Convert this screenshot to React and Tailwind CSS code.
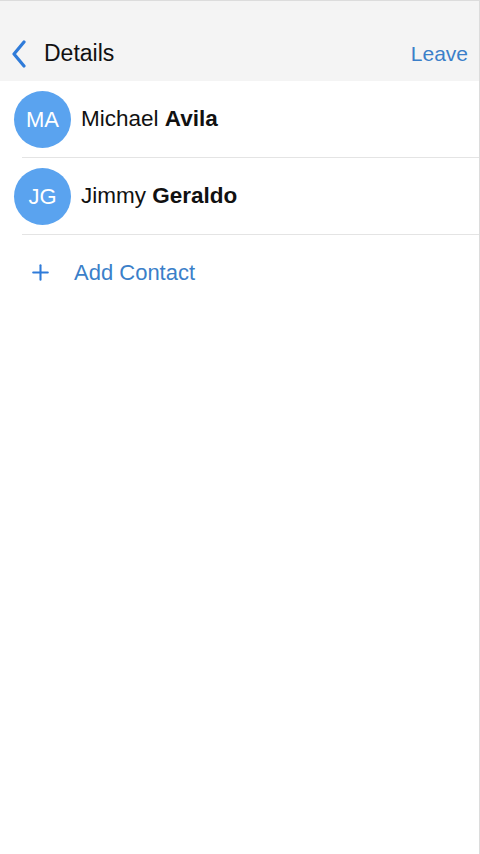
import { Plus } from 'lucide-react';

const contacts = [
  { initials: 'MA', first: 'Michael', last: 'Avila' },
  { initials: 'JG', first: 'Jimmy', last: 'Geraldo' },
];

export default function App() {
  return (
    <div className="h-[854px] w-[480px] bg-white border-t border-r border-[#dcdcdc] overflow-hidden" style={{ fontFamily: '"Liberation Sans", Arial, sans-serif' }}>
      <div className="h-[80px] bg-[#f4f4f4] flex items-center pt-[25px] pl-[10px] pr-[11px]">
        <div className="flex items-center flex-1">
          <svg width="18" height="28" viewBox="0 0 18 28" className="mr-[16px]">
            <path d="M14 2 L4 14 L14 26" fill="none" stroke="#2f7bd9" strokeWidth="3.2" strokeLinecap="round" strokeLinejoin="round" />
          </svg>
          <span className="text-[23px] text-[#111] leading-none">Details</span>
        </div>
        <span className="text-[21px] text-[#3b7fc9] leading-none">Leave</span>
      </div>

      {contacts.map((c) => (
        <div key={c.initials}>
          <div className="flex items-center h-[76px] pl-[14px]">
            <div className="w-[57px] h-[57px] rounded-full bg-[#5aa3ef] flex items-center justify-center text-white text-[22px]">
              {c.initials}
            </div>
            <span className="ml-[10px] text-[22.5px] text-[#111]">
              {c.first} <span className="font-bold">{c.last}</span>
            </span>
          </div>
          <div className="ml-[22px] h-px bg-[#e4e4e4]" />
        </div>
      ))}

      <div className="flex items-center h-[74px] pl-[28px]">
        <Plus size={25} strokeWidth={2} color="#2f7bd9" />
        <span className="ml-[21px] text-[22px] text-[#3b7fc9]">Add Contact</span>
      </div>
    </div>
  );
}
